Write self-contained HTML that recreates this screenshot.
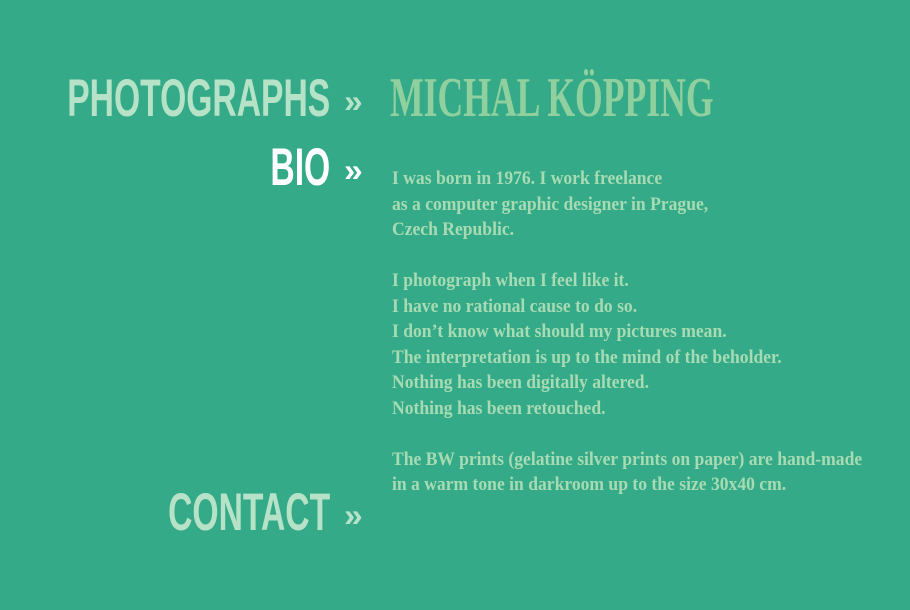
<!DOCTYPE html>
<html><head><meta charset="utf-8"><style>
html,body{margin:0;padding:0}
body{width:910px;height:610px;background:#35aa88;position:relative;overflow:hidden}
.nav{position:absolute;right:580px;font-family:"Liberation Sans",sans-serif;font-weight:bold;font-size:53px;line-height:1;transform:scaleX(0.635);transform-origin:right top;white-space:nowrap;color:#b6e3c7}
.ar{position:absolute;left:344px;font-family:"Liberation Sans",sans-serif;font-weight:bold;font-size:32px;line-height:1;color:#b6e3c7;transform:scaleX(1.05);transform-origin:left top}
.title{position:absolute;left:390px;top:70px;font-family:"Liberation Serif",serif;font-weight:bold;font-size:56px;line-height:1;color:#8fd09e;transform:scaleX(0.636);transform-origin:left top;white-space:nowrap}
.body{position:absolute;left:392px;top:166px;font-family:"Liberation Serif",serif;font-weight:bold;font-size:19px;line-height:25.5px;color:#a6dbb3;transform:scaleX(0.925);transform-origin:left top;white-space:pre}
</style></head><body>
<div class="nav" style="top:72px">PHOTOGRAPHS</div>
<div class="ar" style="top:85px">»</div>
<div class="nav" style="top:141px;color:#ffffff">BIO</div>
<div class="ar" style="top:154px;color:#ffffff">»</div>
<div class="nav" style="top:486px">CONTACT</div>
<div class="ar" style="top:499px">»</div>
<div class="title">MICHAL KÖPPING</div>
<div class="body">I was born in 1976. I work freelance
as a computer graphic designer in Prague,
Czech Republic.

I photograph when I feel like it.
I have no rational cause to do so.
I don’t know what should my pictures mean.
The interpretation is up to the mind of the beholder.
Nothing has been digitally altered.
Nothing has been retouched.

The BW prints (gelatine silver prints on paper) are hand-made
in a warm tone in darkroom up to the size 30x40 cm.</div>
</body></html>
